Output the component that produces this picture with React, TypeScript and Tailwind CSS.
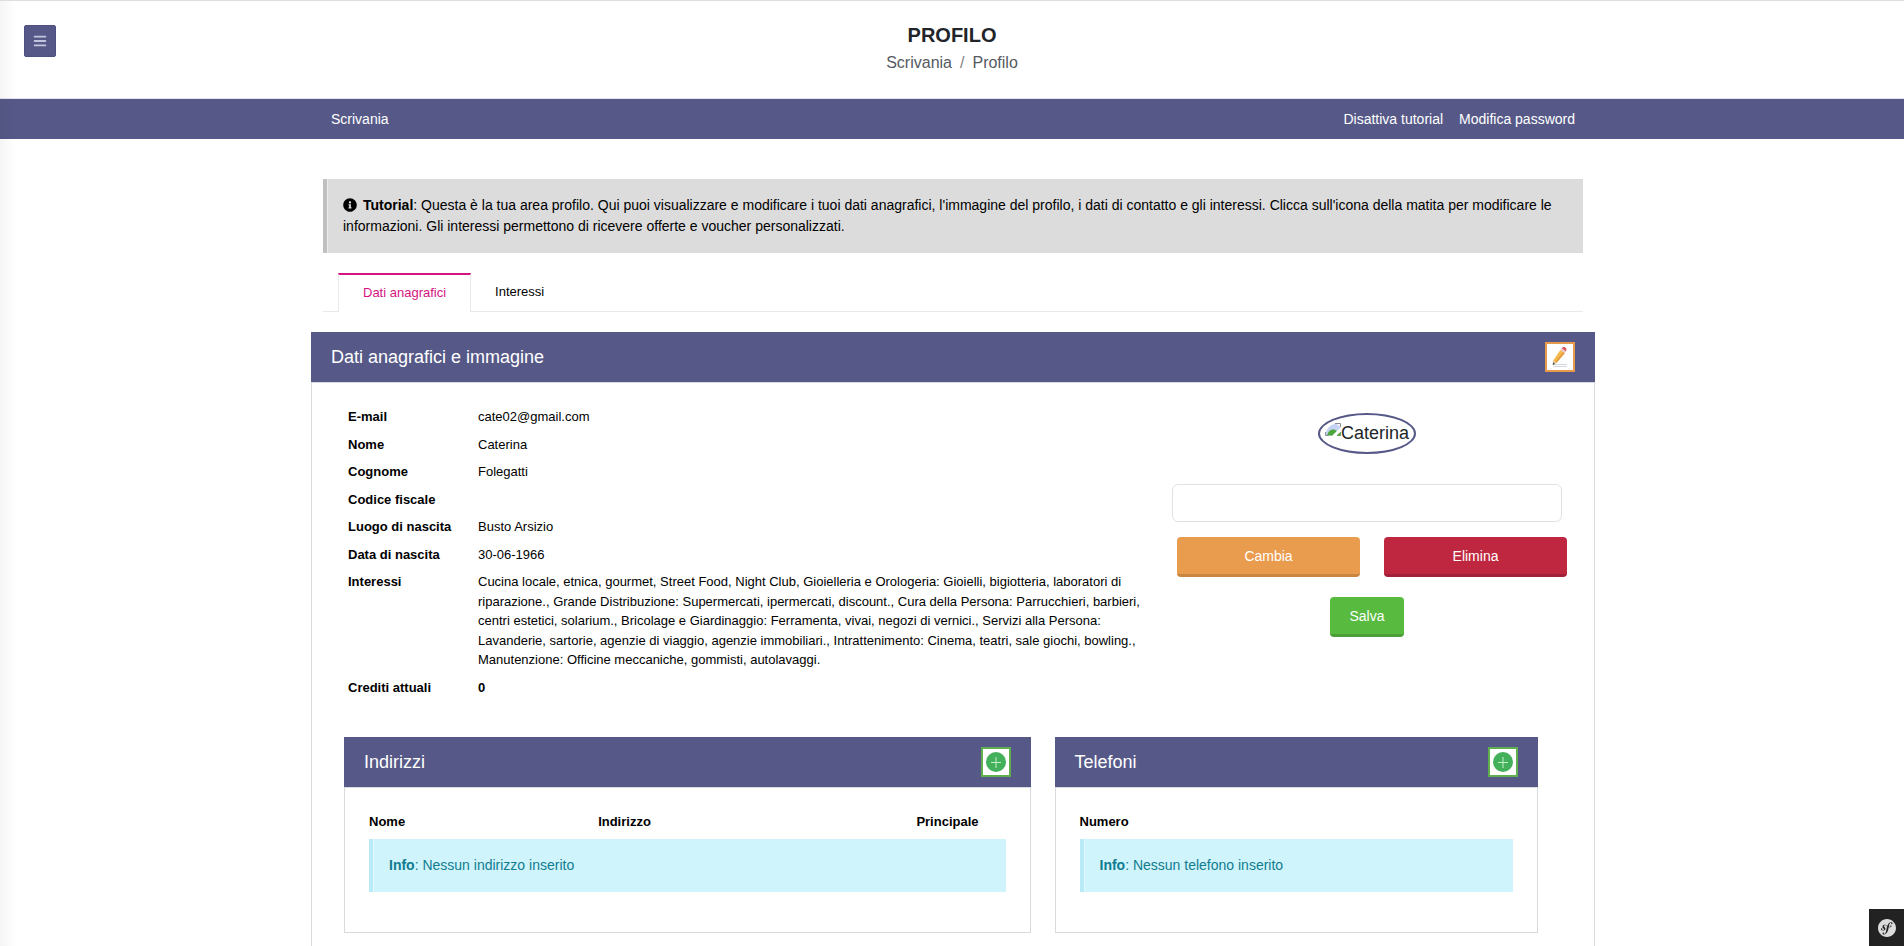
import { ReactNode } from "react";
import { FaBars, FaInfoCircle } from "react-icons/fa";
import { SiSymfony } from "react-icons/si";

interface ProfileRow {
  label: string;
  value: ReactNode;
}

const rows: ProfileRow[] = [
  { label: "E-mail", value: "cate02@gmail.com" },
  { label: "Nome", value: "Caterina" },
  { label: "Cognome", value: "Folegatti" },
  { label: "Codice fiscale", value: "" },
  { label: "Luogo di nascita", value: "Busto Arsizio" },
  { label: "Data di nascita", value: "30-06-1966" },
  {
    label: "Interessi",
    value:
      "Cucina locale, etnica, gourmet, Street Food, Night Club, Gioielleria e Orologeria: Gioielli, bigiotteria, laboratori di riparazione., Grande Distribuzione: Supermercati, ipermercati, discount., Cura della Persona: Parrucchieri, barbieri, centri estetici, solarium., Bricolage e Giardinaggio: Ferramenta, vivai, negozi di vernici., Servizi alla Persona: Lavanderie, sartorie, agenzie di viaggio, agenzie immobiliari., Intrattenimento: Cinema, teatri, sale giochi, bowling., Manutenzione: Officine meccaniche, gommisti, autolavaggi.",
  },
  { label: "Crediti attuali", value: <strong>0</strong> },
];

function PencilIcon() {
  return (
    <svg viewBox="0 0 20 20" className="w-5 h-5" aria-hidden="true">
      <path d="M3 17.500h14M3.500 19.500h13" stroke="#d3d8df" strokeWidth="1" />
      <path d="M2.800 18 3.200 13.500 6.600 15.800z" fill="#dcb98c" />
      <path d="M2.800 18 3 15.600 5 16.900z" fill="#3b4a45" />
      <path d="M3.200 13.500 10.400 3 14.800 5.900 6.600 15.800z" fill="#f6b950" />
      <path d="M5.400 15 13.200 4.900 14.800 5.900 6.600 15.800z" fill="#e39a3a" />
      <path d="M10.400 3 11.700 1.200 16 4.200 14.800 5.900z" fill="#ecc3c9" />
      <path d="M11.700 1.200C12.500 0 14 -.3 15.300.5c1.300.9 1.500 2.300.7 3.700z" fill="#d9535a" />
    </svg>
  );
}

function PlusIcon() {
  return (
    <svg viewBox="0 0 20 20" className="w-5 h-5" aria-hidden="true">
      <circle cx="10" cy="10" r="10" fill="#43b05c" />
      <path d="M10 5v11M5 10.500h10" stroke="#c4f0c8" strokeWidth="1" />
    </svg>
  );
}

function MissingImageIcon() {
  return (
    <svg viewBox="0 0 16 16" className="w-4 h-4" aria-hidden="true">
      <path d="M.5 12.500C.5 7 4 2 11 .5L15.500 4v1.500L7.500 12.500z" fill="#c6d3f5" />
      <path d="M2 12.500C3 9 5 6.500 8 6.500c1.500 0 3 .6 4 1.500l-4.500 4.500z" fill="#4da63b" />
      <path d="M.5 9v3.500h3M10 .5h5.500V4M15.500 9v3.500H12" fill="none" stroke="#8b8f94" />
      <path d="M11.500 12.500 15.500 9v3.500z" fill="#4da63b" />
      <path d="M8.500 13 16 5.500" stroke="#fff" strokeWidth="2" />
    </svg>
  );
}

function CardHeader({ title, children }: { title: string; children: ReactNode }) {
  return (
    <div className="flex items-center justify-between bg-[#565988] px-5 py-2.5">
      <h2 className="text-lg text-white">{title}</h2>
      {children}
    </div>
  );
}

function AddButton({ label }: { label: string }) {
  return (
    <button
      type="button"
      aria-label={label}
      className="flex h-[30px] w-[30px] items-center justify-center border-2 border-[#5fb04c] bg-white"
    >
      <PlusIcon />
    </button>
  );
}

function InfoAlert({ text }: { text: string }) {
  return (
    <div className="border-l-4 border-[#b8ebf7] bg-[#cff4fc] p-4 text-sm leading-[21px] text-[#0f7c90] shadow-[inset_1px_0_0_#e2f9fe]">
      <strong>Info</strong>: {text}
    </div>
  );
}

export default function App() {
  return (
    <div className="relative flex min-h-screen flex-col border-t border-[#dedede] bg-white font-['Liberation_Sans',Arial,sans-serif] text-black">
      {/* shadow of the closed side menu */}
      <div className="pointer-events-none absolute inset-y-0 left-0 w-4 bg-linear-to-r from-black/4 to-transparent" />

      <header className="grid grid-cols-[1fr_auto_1fr] items-start px-6 pt-6 pb-[23px]">
        <button
          type="button"
          aria-label="Menu"
          className="flex h-8 w-8 items-center justify-center rounded-xs border border-[#4d5080] bg-[#565988] text-[#c3c5de]"
        >
          <FaBars className="h-3.5 w-3.5" />
        </button>
        <div className="text-center">
          <h1 className="text-xl leading-5 font-bold text-[#212529]">PROFILO</h1>
          <nav aria-label="breadcrumb" className="mt-1.5 flex justify-center gap-2 text-base leading-6 text-[#555a5f]">
            <a href="#scrivania">Scrivania</a>
            <span className="text-[#7d8287]">/</span>
            <span>Profilo</span>
          </nav>
        </div>
      </header>

      <nav className="border-t border-[#e4e4f0] bg-[#565988] text-sm text-white">
        <div className="mx-auto flex h-10 w-full max-w-[1286px] items-center justify-between pr-5 pl-[22px]">
          <a href="#scrivania">Scrivania</a>
          <div className="flex gap-4">
            <a href="#tutorial">Disattiva tutorial</a>
            <a href="#password">Modifica password</a>
          </div>
        </div>
      </nav>

      <main className="mx-auto flex w-full max-w-[1286px] flex-1 flex-col pt-10 pl-0.5">
        <div className="mx-3 border-l-4 border-[#c0c0c0] bg-[#dcdcdc] p-4 text-sm leading-[21px] shadow-[inset_1px_0_0_#ebebeb]">
          <FaInfoCircle className="mr-1.5 inline h-3.5 w-3.5 align-[-2px]" />
          <strong>Tutorial</strong>: Questa è la tua area profilo. Qui puoi visualizzare e modificare i tuoi dati
          anagrafici, l'immagine del profilo, i dati di contatto e gli interessi. Clicca sull'icona della matita per
          modificare le informazioni. Gli interessi permettono di ricevere offerte e voucher personalizzati.
        </div>

        <div role="tablist" className="mx-3 mt-5 flex h-[39px] border-b border-[#e9e9ec] px-[15px] text-[13px]">
          <button
            type="button"
            role="tab"
            aria-selected="true"
            className="-mb-px border-x border-t-2 border-x-[#e9e9ec] border-t-[#d4147f] bg-white px-6 pb-0.5 text-[#d4147f]"
          >
            Dati anagrafici
          </button>
          <button type="button" role="tab" aria-selected="false" className="px-6">
            Interessi
          </button>
        </div>

        <section className="mt-5 flex flex-1 flex-col">
          <CardHeader title="Dati anagrafici e immagine">
            <button
              type="button"
              aria-label="Modifica"
              className="flex h-[30px] w-[30px] items-center justify-center border-2 border-[#e69a4c] bg-white"
            >
              <PencilIcon />
            </button>
          </CardHeader>

          <div className="flex-1 border border-b-0 border-[#d9dade] px-5 pt-5 pb-3">
            <div className="grid grid-cols-3">
              <div className="col-span-2 px-3">
                <table className="w-full text-left text-[13px] leading-normal">
                  <tbody>
                    {rows.map((row) => (
                      <tr key={row.label} className="align-top">
                        <th scope="row" className="w-[130px] px-1 py-1 font-bold">
                          {row.label}
                        </th>
                        <td className="py-1 pl-1">{row.value}</td>
                      </tr>
                    ))}
                  </tbody>
                </table>
              </div>

              <form className="px-3 pt-2.5" onSubmit={(e) => e.preventDefault()}>
                <div className="mx-auto flex w-fit items-start rounded-[50%] border-2 border-[#565988] px-[5px] py-2 text-lg leading-[21px] text-[#212529]">
                  <MissingImageIcon />
                  Caterina
                </div>
                <input
                  type="text"
                  aria-label="Immagine del profilo"
                  className="mt-[30px] block h-[38px] w-full rounded-md border border-[#dee2e6] px-3 text-base"
                />
                <div className="mt-[15px] -mr-[5px] ml-[5px] grid grid-cols-2 gap-6 text-sm text-white">
                  <button type="button" className="h-10 rounded-sm border-b-3 border-[#c98640] bg-[#ea9c4e]">
                    Cambia
                  </button>
                  <button type="button" className="h-10 rounded-sm border-b-3 border-[#a32138] bg-[#bf2740]">
                    Elimina
                  </button>
                </div>
                <button
                  type="submit"
                  className="mx-auto mt-5 block h-10 rounded-sm border-b-3 border-[#4c9f36] bg-[#59ba40] px-[19px] text-sm text-white"
                >
                  Salva
                </button>
              </form>
            </div>

            <div className="mt-9 grid grid-cols-12 gap-6 pr-9 pl-3">
              <section className="col-span-7">
                <CardHeader title="Indirizzi">
                  <AddButton label="Aggiungi indirizzo" />
                </CardHeader>
                <div className="border border-[#d9dade] px-6 pt-6 pb-10">
                  <table className="w-full table-fixed text-left text-[13px] leading-normal">
                    <thead>
                      <tr>
                        <th className="w-[36%] pb-[7px]">Nome</th>
                        <th className="w-[50%] pb-[7px]">Indirizzo</th>
                        <th className="w-[14%] pb-[7px]">Principale</th>
                      </tr>
                    </thead>
                    <tbody>
                      <tr>
                        <td colSpan={3}>
                          <InfoAlert text="Nessun indirizzo inserito" />
                        </td>
                      </tr>
                    </tbody>
                  </table>
                </div>
              </section>

              <section className="col-span-5">
                <CardHeader title="Telefoni">
                  <AddButton label="Aggiungi telefono" />
                </CardHeader>
                <div className="border border-[#d9dade] px-6 pt-6 pb-10">
                  <table className="w-full text-left text-[13px] leading-normal">
                    <thead>
                      <tr>
                        <th className="pb-[7px]">Numero</th>
                      </tr>
                    </thead>
                    <tbody>
                      <tr>
                        <td>
                          <InfoAlert text="Nessun telefono inserito" />
                        </td>
                      </tr>
                    </tbody>
                  </table>
                </div>
              </section>
            </div>
          </div>
        </section>
      </main>

      <button
        type="button"
        aria-label="Symfony"
        className="fixed right-0 bottom-0 flex h-[37px] w-[35px] items-center justify-center bg-[#222] text-[#dcdcdc]"
      >
        <SiSymfony className="h-[18px] w-[18px]" />
      </button>
    </div>
  );
}
